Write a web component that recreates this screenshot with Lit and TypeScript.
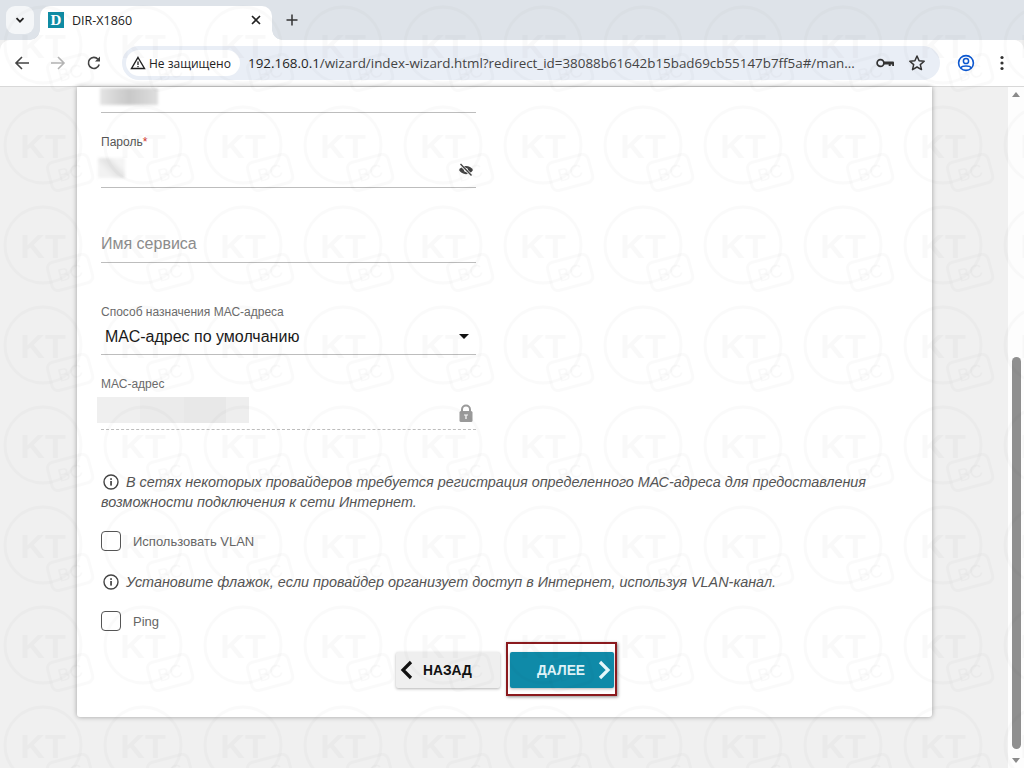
import { LitElement, html, css, svg } from "lit";
import { customElement } from "lit/decorators.js";

const infoIcon = html`<svg class="info-ic" width="16" height="16" viewBox="0 0 16 16"><circle cx="8" cy="8" r="7" fill="none" stroke="#444" stroke-width="1.4"/><rect x="7.2" y="7" width="1.7" height="4.6" fill="#444"/><rect x="7.2" y="4.2" width="1.7" height="1.7" fill="#444"/></svg>`;

@customElement("app-root")
export class AppRoot extends LitElement {
  static styles = css`
    :host { display: block; width: 1024px; height: 768px; position: relative; overflow: hidden; font-family: "Liberation Sans", Arial, sans-serif; background: #f0f0f0; }
    * { box-sizing: border-box; }
    .strip { height: 40px; background: #dee3e9; display: flex; padding: 6px 0 0 6px; font-family: "Open Sans", "Noto Sans", sans-serif; }
    .tabs-btn { width: 28px; height: 28px; border-radius: 9px; background: #f4f6f8; display: flex; align-items: center; justify-content: center; }
    .tab { width: 232px; height: 34px; margin-left: 6px; background: #fff; border-radius: 10px 10px 0 0; display: flex; align-items: center; padding: 0 0 6px 8px; position: relative; }
    .tab::before, .tab::after { content: ""; position: absolute; bottom: 0; width: 10px; height: 10px; background: radial-gradient(circle at 0 0, transparent 9.5px, #fff 10px); }
    .tab::before { left: -10px; }
    .tab::after { right: -10px; background: radial-gradient(circle at 100% 0, transparent 9.5px, #fff 10px); }
    .fav { width: 16px; height: 16px; background: #0f8ba3; color: #fff; font: bold 15px/16px "Liberation Serif", serif; text-align: center; }
    .title { margin-left: 8px; font-size: 12.5px; color: #222; flex: 1; }
    .close { width: 16px; height: 16px; margin-right: 8px; }
    .plus { margin: 6px 0 0 12px; }
    .toolbar { height: 46px; background: #fff; border-radius: 10px 10px 0 0; display: flex; align-items: center; font-family: "Open Sans", "Noto Sans", sans-serif; padding-left: 14px; position: relative; }
    .nav { width: 16px; height: 16px; margin-right: 20px; }
    .omni { width: 818px; height: 34px; border-radius: 17px; background: #e9eef6; display: flex; align-items: center; padding-left: 4px; flex: none; }
    .pill { width: 114px; height: 26px; border-radius: 13px; background: #fff; display: flex; align-items: center; padding-left: 4px; gap: 3px; font-size: 12px; color: #222; white-space: nowrap; }
    .url { margin-left: 8px; font-size: 13.4px; color: #1f1f1f; width: 622px; white-space: nowrap; flex: none; }
    .url b { font-weight: 400; }
    .url span { color: #444; }
    .omni-ic { margin-left: 6px; }
    .star { margin-left: 14px; }
    .profile { margin-left: 17px; flex: none; }
    .dots { margin-left: 25px; flex: none; }
    .sep { height: 1px; background: #d8d8d8; }
    .page { height: 681px; display: flex; background: #f0f0f0; position: relative; }
    .card { margin-left: 77px; width: 855px; height: 630px; background: #fff; box-shadow: 0 0 5px rgba(0,0,0,.35); border-radius: 0 0 3px 3px; padding: 0 24px; }
    .scroll { position: absolute; right: 0; top: 0; bottom: 0; width: 16px; background: #fdfdfd; }
    .thumb { position: absolute; left: 4px; top: 270px; width: 9px; height: 392px; border-radius: 5px; background: #8f8f8f; }
    .up { position: absolute; left: 4px; top: 5px; width: 0; height: 0; border: 4.5px solid transparent; border-top: 0; border-bottom: 5px solid #8a8a8a; }
    .down { position: absolute; left: 4px; bottom: 5px; width: 0; height: 0; border: 4.5px solid transparent; border-bottom: 0; border-top: 5px solid #8a8a8a; }
    .field { width: 375px; border-bottom: 1px solid #bdbdbd; display: flex; flex-direction: column; padding-top: 22px; height: 75px; }
    .field.first { height: 26px; padding-top: 0; }
    .field.sel { height: 71px; margin-top: 21px; padding-top: 21px; }
    .field.plain { padding-top: 38px; }
    .field.dashed { border-bottom: 1px dashed #bdbdbd; }
    .label { font-size: 12px; line-height: 14px; color: #6b6b6b; }
    .label.dark { color: #555; }
    .label i { font-style: normal; color: #d0342c; }
    .row { flex: 1; display: flex; align-items: center; justify-content: space-between; }
    .placeholder { font-size: 16px; color: #8c8c8c; }
    .value { font-size: 16px; color: #1a1a1a; padding: 1px 0 0 4px; }
    .caret { width: 0; height: 0; border: 5px solid transparent; border-bottom: 0; border-top: 5px solid #111; margin-right: 7px; }
    .blur1 { width: 58px; height: 17px; margin: 1px 0 0 -1px; background: linear-gradient(90deg, #e4e4e4, #c8c8c8 50%, #dedede); filter: blur(1.5px); }
    .blur2 { width: 27px; height: 20px; margin-left: -3px; background: linear-gradient(45deg, #f2f2f2 30%, #e2e2e2 55%, #f4f4f4 75%); filter: blur(1.5px); }
    .blur3 { width: 152px; height: 26px; margin-left: -4px; background: linear-gradient(90deg, #efefef 0 28%, #ebebeb 28% 57%, #e8e8e8 57% 85%, #eeeeee 85%); }
    .ic { margin: 3px 2px 0 0; }
    .lock { margin: 6px 3px 0 0; }
    .info { margin-top: 42px; width: 790px; font-size: 14.4px; line-height: 20px; font-style: italic; color: #555; }
    .info.second { margin-top: 21px; }
    .info-ic { vertical-align: -3px; margin: 0 3px 0 2px; }
    .check { display: flex; align-items: center; height: 20px; margin-top: 19px; font-size: 13px; color: #666; }
    .box { width: 20px; height: 20px; border: 1.5px solid #555; border-radius: 4px; margin-right: 12px; background: #fff; }
    .buttons { display: flex; justify-content: center; gap: 10px; margin: 21px 0 0 0; width: 808px; position: relative; }
    .btn { width: 104px; height: 36px; border-radius: 2px; display: flex; align-items: center; font-weight: 700; font-size: 13.8px; box-shadow: 0 1px 3px rgba(0,0,0,.3); }
    .back { background: #efefef; color: #111; padding-left: 4px; gap: 9px; }
    .next { background: #0f8aa8; color: #dff3f8; padding-left: 27px; gap: 12px; position: relative; }
    .frame { position: absolute; left: -4px; top: -10px; width: 111px; height: 54px; border: 2px solid #8b1a1e; box-shadow: 1px 1px 3px rgba(0,0,0,.45); pointer-events: none; }
    .wm { position: absolute; inset: 0; pointer-events: none; }
    .wm text { font-family: "Liberation Sans", Arial, sans-serif; }
  `;

  render() {
    return html`
      <div class="strip">
        <div class="tabs-btn"><svg width="12" height="12" viewBox="0 0 12 12"><path d="M2.5 4.2 6 7.7l3.5-3.5" fill="none" stroke="#222" stroke-width="1.8"/></svg></div>
        <div class="tab">
          <div class="fav">D</div>
          <div class="title">DIR-X1860</div>
          <svg class="close" viewBox="0 0 16 16"><path d="M4 4l8 8M12 4l-8 8" stroke="#222" stroke-width="1.6"/></svg>
        </div>
        <svg class="plus" width="16" height="16" viewBox="0 0 16 16"><path d="M8 2.5v11M2.5 8h11" stroke="#333" stroke-width="1.5"/></svg>
      </div>
      <div class="toolbar">
        <svg class="nav" viewBox="0 0 16 16"><path d="M15 8H2.5M8 2 2 8l6 6" fill="none" stroke="#444" stroke-width="1.6"/></svg>
        <svg class="nav" viewBox="0 0 16 16"><path d="M1 8h12.5M8 2l6 6-6 6" fill="none" stroke="#b4b4b4" stroke-width="1.6"/></svg>
        <svg class="nav" viewBox="0 0 16 16"><path d="M13.2 9.5A5.5 5.5 0 1 1 12 4.2" fill="none" stroke="#444" stroke-width="1.6"/><path d="M14 1.5V6.5H9z" fill="#444"/></svg>
        <div class="omni">
          <div class="pill">
            <svg width="16" height="16" viewBox="0 0 16 16"><path d="M8 2.5 14.5 13.5H1.5Z" fill="none" stroke="#222" stroke-width="1.4"/><path d="M8 6.5v3.6M8 11v1.3" stroke="#222" stroke-width="1.3"/></svg>
            Не защищено
          </div>
          <div class="url"><b>192.168.0.1</b><span>/wizard/index-wizard.html?redirect_id=38088b61642b15bad69cb55147b7ff5a#/man...</span></div>
          <svg class="omni-ic" width="18" height="18" viewBox="0 0 18 18"><circle cx="4.500" cy="9" r="3.400" fill="none" stroke="#333" stroke-width="1.700"/><path d="M7.800 7.400H17a1 1 0 0 1 1 1V12h-1.800v-1.500h-1.500V12h-2v-1.500H7.800z" fill="#333"/></svg>
          <svg class="omni-ic star" width="18" height="18" viewBox="0 0 18 18"><path d="M9 2l2.100 4.700 5.100.5-3.900 3.400 1.200 5L9 13l-4.500 2.600 1.200-5-3.900-3.400 5.100-.5z" fill="none" stroke="#333" stroke-width="1.500" stroke-linejoin="round"/></svg>
        </div>
        <svg class="profile" width="18" height="18" viewBox="0 0 18 18"><circle cx="9" cy="9" r="7.400" fill="none" stroke="#0b57d0" stroke-width="1.600"/><circle cx="9" cy="7" r="2.600" fill="none" stroke="#0b57d0" stroke-width="1.500"/><path d="M4 14c1-2.600 9-2.600 10 0" fill="none" stroke="#0b57d0" stroke-width="1.500"/></svg>
        <svg class="dots" width="4" height="16" viewBox="0 0 4 16"><circle cx="2" cy="2.500" r="1.600" fill="#333"/><circle cx="2" cy="8" r="1.600" fill="#333"/><circle cx="2" cy="13.500" r="1.600" fill="#333"/></svg>
      </div>
      <div class="sep"></div>
      <div class="page">
        <div class="card">
          <div class="field first"><div class="blur1"></div></div>
          <div class="field">
            <div class="label dark">Пароль<i>*</i></div>
            <div class="row">
              <div class="blur2"></div>
              <svg class="ic" width="16" height="14" viewBox="0 0 16 14"><path d="M1 7c3-5.500 11-5.500 14 0-3 5.500-11 5.500-14 0z" fill="#444"/><circle cx="8" cy="7" r="2" fill="#fff"/><path d="M2.500 1.500l11 11" stroke="#fff" stroke-width="2.800"/><path d="M2.500 1l11 11.500" stroke="#444" stroke-width="1.400"/></svg>
            </div>
          </div>
          <div class="field plain"><div class="row"><div class="placeholder">Имя сервиса</div></div></div>
          <div class="field sel">
            <div class="label">Способ назначения МАС-адреса</div>
            <div class="row"><div class="value">МАС-адрес по умолчанию</div><div class="caret"></div></div>
          </div>
          <div class="field dashed">
            <div class="label">МАС-адрес</div>
            <div class="row">
              <div class="blur3"></div>
              <svg class="lock" width="14" height="18" viewBox="0 0 14 18"><path d="M3 8V5.500a4 4 0 0 1 8 0V8" fill="none" stroke="#9a9a9a" stroke-width="2"/><rect x="0.500" y="7" width="13" height="11" rx="1.500" fill="#9a9a9a"/><path d="M5 11h4M7 11v4" stroke="#fff" stroke-width="1.200"/></svg>
            </div>
          </div>
          <div class="info">${infoIcon} В сетях некоторых провайдеров требуется регистрация определенного МАС-адреса для предоставления возможности подключения к сети Интернет.</div>
          <div class="check"><div class="box"></div>Использовать VLAN</div>
          <div class="info second">${infoIcon} Установите флажок, если провайдер организует доступ в Интернет, используя VLAN-канал.</div>
          <div class="check"><div class="box"></div>Ping</div>
          <div class="buttons">
            <div class="btn back"><svg width="14" height="20" viewBox="0 0 14 20"><path d="M11 2 3 10l8 8" fill="none" stroke="#111" stroke-width="3.200"/></svg>НАЗАД</div>
            <div class="btn next">ДАЛЕЕ<svg width="14" height="20" viewBox="0 0 14 20"><path d="M3 2l8 8-8 8" fill="none" stroke="#e6f6fa" stroke-width="3.200"/></svg><div class="frame"></div></div>
          </div>
        </div>
        <div class="scroll"><div class="up"></div><div class="thumb"></div><div class="down"></div></div>
      </div>
      <svg class="wm" width="1024" height="768">
        <defs>
          <pattern id="kt" patternUnits="userSpaceOnUse" width="100" height="100">
            ${svg`<g fill="none" stroke="#000" stroke-opacity=".02" stroke-width="2.800">
              <circle cx="43" cy="45" r="38"/>
              <rect x="49" y="58" width="42" height="29" rx="6" transform="rotate(-15 70 72)"/>
            </g>
            <text x="43" y="58" text-anchor="middle" font-size="34" font-weight="700" fill="#000" fill-opacity=".022">KT</text>
            <text x="70" y="79" text-anchor="middle" font-size="18" fill="#000" fill-opacity=".022" transform="rotate(-15 70 72)">BC</text>`}
          </pattern>
        </defs>
        <rect width="1024" height="768" fill="url(#kt)"/>
      </svg>
    `;
  }
}
